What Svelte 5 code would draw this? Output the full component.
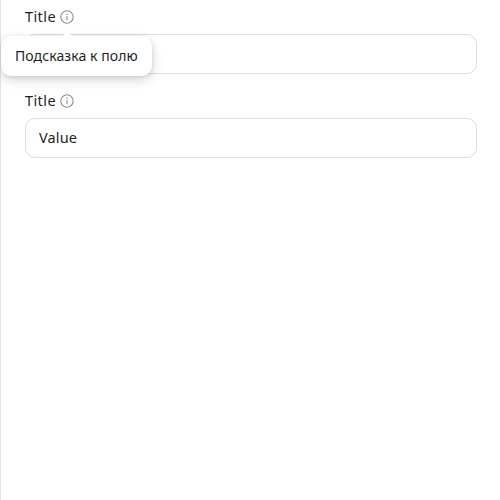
<script>
  const fields = [
    { title: 'Title', value: '', hint: 'Подсказка к полю' },
    { title: 'Title', value: 'Value', hint: '' },
  ];
</script>

<main>
  {#each fields as field}
    <div class="field">
      <div class="label">
        <span class="title">{field.title}</span>
        <span class="info">
          <svg width="14" height="14" viewBox="0 0 14 14" fill="none">
            <circle cx="7" cy="7" r="6.2" stroke="#8c8c8c" stroke-width="1.1" />
            <path d="M7 6v4.3" stroke="#8c8c8c" stroke-width="1.1" />
            <circle cx="7" cy="4.3" r=".75" fill="#8c8c8c" />
          </svg>
          {#if field.hint}
            <span class="tooltip">{field.hint}</span>
          {/if}
        </span>
      </div>
      <div class="input">{field.value}</div>
    </div>
  {/each}
</main>

<style>
  main {
    box-sizing: border-box;
    height: 500px;
    padding: 7px 23px 0 24px;
    border-left: 1px solid #e6e6e6;
    background: #fff;
    color: #1f1f1f;
    font: 14px/20px 'Noto Sans', sans-serif;
  }
  .field {
    height: 67px;
    margin-bottom: 17px;
  }
  .label {
    display: flex;
    align-items: center;
    height: 20px;
    margin-bottom: 7px;
  }
  .title {
    width: 35px;
    padding-bottom: 2px;
    font-size: 14.5px;
    letter-spacing: 0.4px;
  }
  .info {
    position: relative;
    display: flex;
  }
  .input {
    box-sizing: border-box;
    height: 40px;
    padding: 8px 13px;
    border: 1px solid #dedede;
    border-radius: 10px;
    font-size: 14.5px;
    letter-spacing: 0.15px;
  }
  .tooltip {
    position: absolute;
    z-index: 1;
    top: 26px;
    left: -59px;
    box-sizing: border-box;
    width: 151px;
    height: 40px;
    padding: 10px 14px;
    border-radius: 10px;
    background: #fff;
    box-shadow: 0 4px 12px rgba(0, 0, 0, 0.16), 0 1px 4px rgba(0, 0, 0, 0.1);
    letter-spacing: 0.08px;
    white-space: nowrap;
  }
  .tooltip::before {
    content: '';
    position: absolute;
    left: 66px;
    top: -3px;
    width: 8px;
    height: 8px;
    margin-left: -4px;
    border-radius: 1px;
    transform: rotate(45deg);
    background: #fff;
  }
</style>
